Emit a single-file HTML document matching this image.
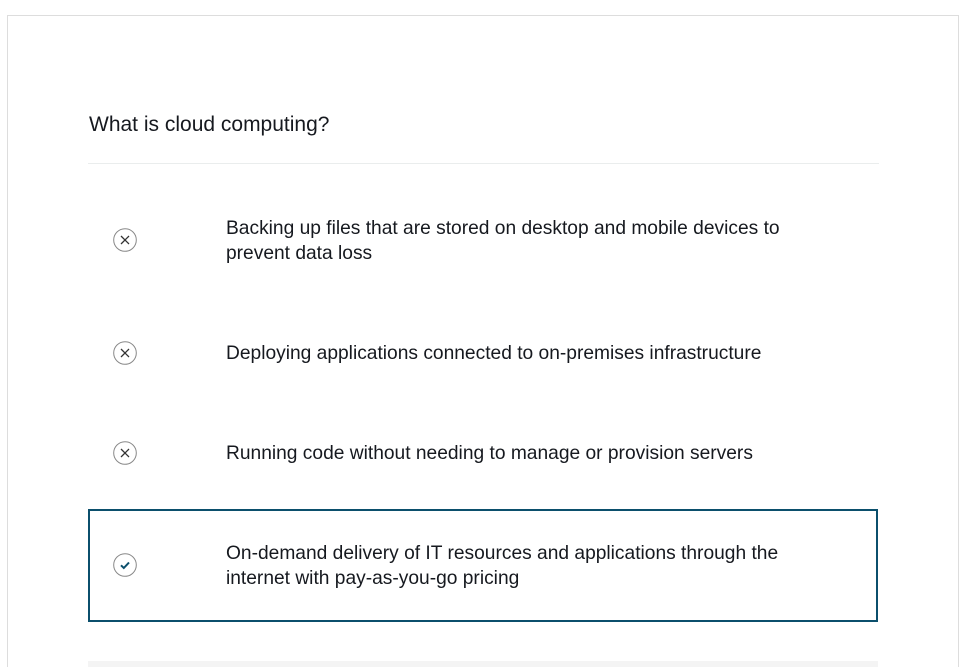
<!DOCTYPE html>
<html><head><style>
html,body{margin:0;width:960px;height:667px;overflow:hidden;background:#fff;font-family:"Liberation Sans",sans-serif;color:#232f3e;}
.card{position:absolute;left:7px;top:15px;width:952px;height:652px;border:1px solid #ddd;border-bottom:none;box-sizing:border-box;}
.q{position:absolute;left:89px;top:113px;font-size:21px;color:#16191f;}
.hr{position:absolute;left:88px;top:163px;width:791px;height:1px;background:#eaeded;}
.opt{position:absolute;left:226px;font-size:19.2px;line-height:25px;color:#16191f;white-space:nowrap;}
.ic{position:absolute;left:113px;width:24px;height:24px;}
.sel{position:absolute;left:88px;top:509px;width:790px;height:113px;border:2px solid #0b4f6c;box-sizing:border-box;}
.strip{position:absolute;left:88px;top:661px;width:790px;height:6px;background:#f4f4f4;}
</style></head><body>
<div class="card"></div>
<div class="q">What is cloud computing?</div>
<div class="hr"></div>
<svg class="ic" style="top:228px" viewBox="0 0 24 24"><circle cx="12" cy="12" r="11.3" fill="none" stroke="#888" stroke-width="1"/><path d="M8 8L16 16M16 8L8 16" stroke="#333" stroke-width="1.3"/></svg>
<div class="opt" style="top:216px">Backing up files that are stored on desktop and mobile devices to<br>prevent data loss</div>
<svg class="ic" style="top:341px" viewBox="0 0 24 24"><circle cx="12" cy="12" r="11.3" fill="none" stroke="#888" stroke-width="1"/><path d="M8 8L16 16M16 8L8 16" stroke="#333" stroke-width="1.3"/></svg>
<div class="opt" style="top:341px">Deploying applications connected to on-premises infrastructure</div>
<svg class="ic" style="top:441px" viewBox="0 0 24 24"><circle cx="12" cy="12" r="11.3" fill="none" stroke="#888" stroke-width="1"/><path d="M8 8L16 16M16 8L8 16" stroke="#333" stroke-width="1.3"/></svg>
<div class="opt" style="top:441px">Running code without needing to manage or provision servers</div>
<div class="sel"></div>
<svg class="ic" style="top:553px" viewBox="0 0 24 24"><circle cx="12" cy="12" r="11.3" fill="none" stroke="#888" stroke-width="1"/><path d="M8 12.3L10.8 15L16 9.5" fill="none" stroke="#0b4f6c" stroke-width="2"/></svg>
<div class="opt" style="top:541px">On-demand delivery of IT resources and applications through the<br>internet with pay-as-you-go pricing</div>
<div class="strip"></div>
</body></html>
